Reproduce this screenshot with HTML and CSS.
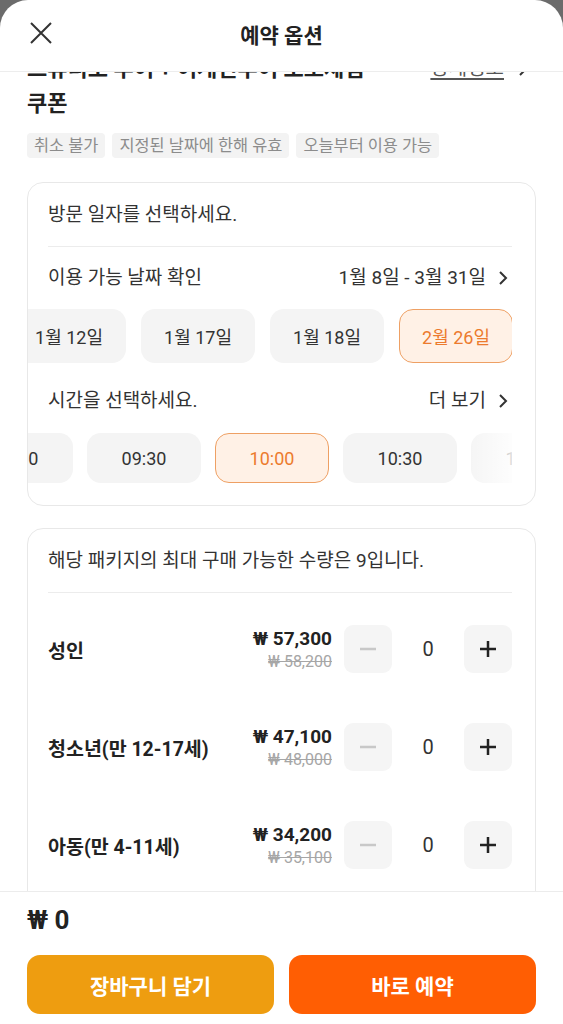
FILE: index.html
```html
<!DOCTYPE html>
<html lang="ko">
<head>
    <meta charset="UTF-8">
    <meta name="viewport" content="width=device-width, initial-scale=1.0">
    <title>예약 옵션</title>
    <link rel="stylesheet" href="styles.css">
</head>
<body>
    <div class="sheet">
        <div class="sheet-header">
            <button class="close-btn" aria-label="닫기">
                <svg width="24" height="24" viewBox="0 0 24 24"><path d="M2 2 L22 22 M22 2 L2 22" stroke="#333" stroke-width="2" fill="none"/></svg>
            </button>
            <div class="sheet-title">예약 옵션</div>
        </div>

        <div class="sheet-body">
            <div class="product">
                <div class="product-name">스튜디오 투어 + 어게인투어 포토체험 쿠폰</div>
                <a class="detail-link"><span class="detail-text">상세정보</span> <svg width="10" height="14" viewBox="0 0 10 14"><path d="M2 1 L8 7 L2 13" stroke="#333" stroke-width="2" fill="none"/></svg></a>
            </div>
            <div class="tags">
                <span class="tag">취소 불가</span>
                <span class="tag">지정된 날짜에 한해 유효</span>
                <span class="tag">오늘부터 이용 가능</span>
            </div>

            <div class="card">
                <div class="card-head">방문 일자를 선택하세요.</div>
                <div class="row-line">
                    <span>이용 가능 날짜 확인</span>
                    <span class="row-link">1월 8일 - 3월 31일 <svg width="10" height="16" viewBox="0 0 10 16"><path d="M2 2 L8 8 L2 14" stroke="#333" stroke-width="2" fill="none"/></svg></span>
                </div>
                <div class="chip-row">
                    <div class="chips dates">
                        <div class="chip">1월 12일</div>
                        <div class="chip">1월 17일</div>
                        <div class="chip">1월 18일</div>
                        <div class="chip selected">2월 26일</div>
                    </div>
                </div>
                <div class="row-line time-title">
                    <span>시간을 선택하세요.</span>
                    <span class="row-link">더 보기 <svg width="10" height="16" viewBox="0 0 10 16"><path d="M2 2 L8 8 L2 14" stroke="#333" stroke-width="2" fill="none"/></svg></span>
                </div>
                <div class="chip-row fade">
                    <div class="chips times">
                        <div class="chip">09:00</div>
                        <div class="chip">09:30</div>
                        <div class="chip selected">10:00</div>
                        <div class="chip">10:30</div>
                        <div class="chip">11:00</div>
                    </div>
                </div>
            </div>

            <div class="card qty-card">
                <div class="card-head">해당 패키지의 최대 구매 가능한 수량은 9입니다.</div>
                <div class="qty-list">
                    <div class="qty-row">
                        <div class="qty-label">성인</div>
                        <div class="price">
                            <div class="price-now">₩ 57,300</div>
                            <div class="price-old">₩ 58,200</div>
                        </div>
                        <div class="stepper">
                            <button class="step-btn minus"><svg width="18" height="18" viewBox="0 0 18 18"><path d="M1 9 H17" stroke="#c8c8c8" stroke-width="2.5"/></svg></button>
                            <span class="count">0</span>
                            <button class="step-btn"><svg width="18" height="18" viewBox="0 0 18 18"><path d="M1 9 H17 M9 1 V17" stroke="#222" stroke-width="2.5"/></svg></button>
                        </div>
                    </div>
                    <div class="qty-row">
                        <div class="qty-label">청소년(만 12-17세)</div>
                        <div class="price">
                            <div class="price-now">₩ 47,100</div>
                            <div class="price-old">₩ 48,000</div>
                        </div>
                        <div class="stepper">
                            <button class="step-btn minus"><svg width="18" height="18" viewBox="0 0 18 18"><path d="M1 9 H17" stroke="#c8c8c8" stroke-width="2.5"/></svg></button>
                            <span class="count">0</span>
                            <button class="step-btn"><svg width="18" height="18" viewBox="0 0 18 18"><path d="M1 9 H17 M9 1 V17" stroke="#222" stroke-width="2.5"/></svg></button>
                        </div>
                    </div>
                    <div class="qty-row">
                        <div class="qty-label">아동(만 4-11세)</div>
                        <div class="price">
                            <div class="price-now">₩ 34,200</div>
                            <div class="price-old">₩ 35,100</div>
                        </div>
                        <div class="stepper">
                            <button class="step-btn minus"><svg width="18" height="18" viewBox="0 0 18 18"><path d="M1 9 H17" stroke="#c8c8c8" stroke-width="2.5"/></svg></button>
                            <span class="count">0</span>
                            <button class="step-btn"><svg width="18" height="18" viewBox="0 0 18 18"><path d="M1 9 H17 M9 1 V17" stroke="#222" stroke-width="2.5"/></svg></button>
                        </div>
                    </div>
                </div>
            </div>
        </div>

        <div class="sheet-footer">
            <div class="total">₩ 0</div>
            <div class="actions">
                <button class="btn cart">장바구니 담기</button>
                <button class="btn book">바로 예약</button>
            </div>
        </div>
    </div>
</body>
</html>
```

FILE: styles.css
```css
* {
    box-sizing: border-box;
}

body {
    margin: 0;
    background-color: #6b6b6b;
    font-family: 'Roboto', 'Noto Sans CJK KR', sans-serif;
    color: #222;
}

button {
    font-family: inherit;
    border: none;
    cursor: pointer;
}

.sheet {
    width: 563px;
    height: 1024px;
    background-color: #fff;
    border-radius: 28px 28px 0 0;
    display: flex;
    flex-direction: column;
    overflow: hidden;
}

.sheet-header {
    height: 72px;
    flex-shrink: 0;
    display: flex;
    align-items: center;
    justify-content: center;
    position: relative;
    border-bottom: 1px solid #ededed;
}

.close-btn {
    position: absolute;
    left: 29px;
    top: 21px;
    width: 24px;
    height: 24px;
    padding: 0;
    background: none;
}

.sheet-title {
    font-size: 21px;
    font-weight: 700;
    margin-top: -4px;
}

.sheet-body {
    flex: 1;
    overflow: hidden;
    padding: 0 27px;
}

.product {
    display: flex;
    align-items: flex-start;
    justify-content: space-between;
    margin-top: -21px;
}

.product-name {
    width: 360px;
    font-size: 22px;
    font-weight: 700;
    line-height: 35px;
    color: #222;
}

.detail-link {
    flex-shrink: 0;
    display: flex;
    align-items: center;
    gap: 14px;
    font-size: 20px;
    color: #555;
    line-height: 35px;
    margin-right: 8px;
    white-space: nowrap;
}

.detail-text {
    text-decoration: underline;
    text-underline-offset: 3px;
}

.tags {
    display: flex;
    gap: 7px;
    margin-top: 12px;
}

.tag {
    height: 25px;
    line-height: 25px;
    padding: 0 7px;
    font-size: 16.4px;
    color: #8c8c8c;
    background-color: #f3f3f3;
    border-radius: 4px;
}

.card {
    margin-top: 24px;
    border: 1px solid #e8e8e8;
    border-radius: 16px;
    padding: 0 23px 22px 20px;
    overflow: hidden;
}

.card-head {
    font-size: 19px;
    line-height: 24px;
    color: #333;
    padding: 20px 0 19px;
    border-bottom: 1px solid #ececec;
}

.row-line {
    display: flex;
    justify-content: space-between;
    align-items: center;
    font-size: 19px;
    line-height: 24px;
    color: #333;
    padding: 19px 0;
}

.row-link {
    display: flex;
    align-items: center;
    gap: 12px;
    margin-right: 4px;
}

.time-title {
    padding: 26px 0 20px;
}

.chip-row {
    margin-left: -20px;
    overflow: hidden;
    position: relative;
}

.chip-row.fade::after {
    content: '';
    position: absolute;
    right: 0;
    top: 0;
    bottom: 0;
    width: 48px;
    background: linear-gradient(to right, rgba(255, 255, 255, 0), rgba(255, 255, 255, 0.85));
}

.chips {
    display: flex;
    gap: 15px;
}

.chips.dates {
    margin-left: -16px;
}

.chips.times {
    margin-left: -69px;
    gap: 14px;
}

.chip {
    flex-shrink: 0;
    width: 114px;
    height: 54px;
    border-radius: 14px;
    background-color: #f4f4f4;
    display: flex;
    align-items: center;
    justify-content: center;
    font-size: 18px;
    color: #333;
}

.times .chip {
    height: 50px;
}

.chip.selected {
    background-color: #fff1e6;
    border: 1.5px solid #eea064;
    color: #ec7b2e;
}

.qty-card {
    margin-top: 22px;
    padding-bottom: 60px;
}

.card-head + .qty-list {
    padding-top: 7px;
}

.qty-row {
    height: 98px;
    display: flex;
    align-items: center;
}

.qty-label {
    flex: 1;
    font-size: 19.5px;
    font-weight: 700;
    color: #222;
}

.price {
    text-align: right;
    margin-right: 12px;
}

.price-now {
    font-size: 19px;
    font-weight: 700;
    line-height: 25px;
}

.price-old {
    font-size: 16px;
    color: #a6a6a6;
    text-decoration: line-through;
    line-height: 22px;
}

.stepper {
    display: flex;
    align-items: center;
}

.step-btn {
    width: 48px;
    height: 48px;
    border-radius: 9px;
    background-color: #f5f5f5;
    padding: 0;
    display: flex;
    align-items: center;
    justify-content: center;
}

.count {
    width: 72px;
    text-align: center;
    font-size: 20px;
    color: #333;
}

.sheet-footer {
    flex-shrink: 0;
    border-top: 1px solid #ececec;
    padding: 13px 27px 10px;
}

.total {
    font-size: 26px;
    font-weight: 700;
    line-height: 30px;
}

.actions {
    display: flex;
    gap: 15px;
    margin-top: 20px;
}

.btn {
    flex: 1;
    height: 59px;
    border-radius: 13px;
    font-size: 21px;
    font-weight: 700;
    color: #fff;
}

.btn.cart {
    background-color: #ee9d10;
}

.btn.book {
    background-color: #ff5e03;
}
```
